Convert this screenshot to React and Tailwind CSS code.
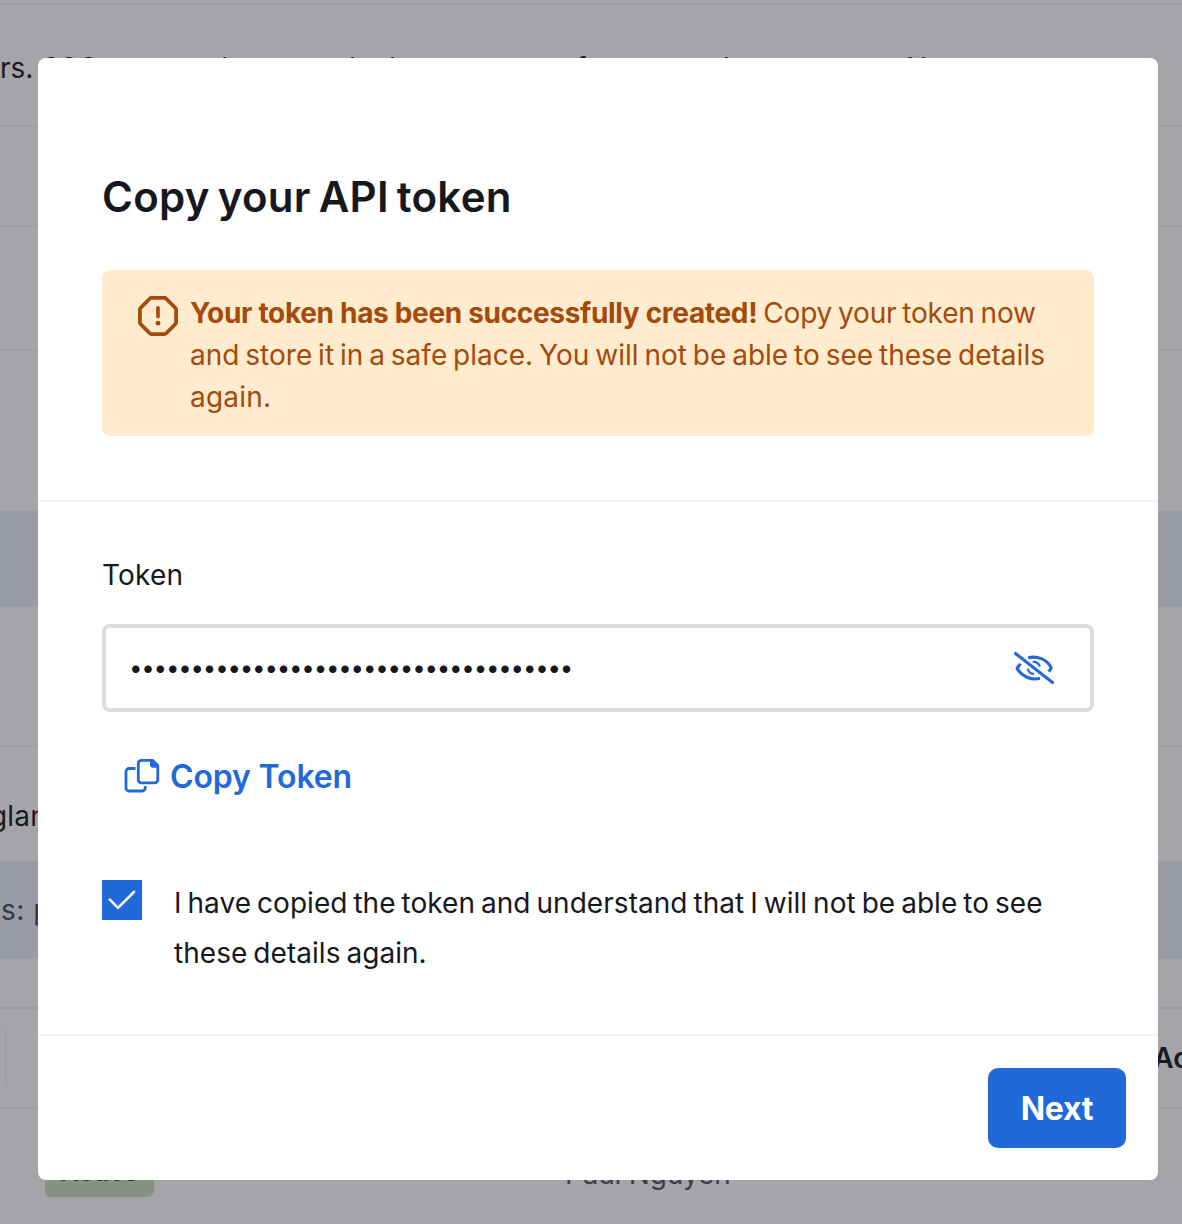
import React, { useState } from 'react';
import clsx from 'clsx';

const AlertOctagon = () => (
  <svg className="h-10 w-10 shrink-0" viewBox="0 0 40 40" fill="none" stroke="currentColor">
    <path d="M13.4 1.9h13.2c.6 0 1 .2 1.4.6l9.5 9.5c.4.4.6.8.6 1.4v13.2c0 .6-.2 1-.6 1.4l-9.5 9.5c-.4.4-.8.6-1.4.6H13.4c-.6 0-1-.2-1.4-.6l-9.5-9.5c-.4-.4-.6-.8-.6-1.4V13.4c0-.6.2-1 .6-1.4l9.5-9.5c.4-.4.8-.6 1.4-.6Z" strokeWidth="3.8" />
    <path d="M20 11.8v9" strokeWidth="3.6" strokeLinecap="round" />
    <circle cx="20" cy="27.2" r="2.4" fill="currentColor" stroke="none" />
  </svg>
);

const EyeHidden = () => (
  <svg className="h-10 w-10" viewBox="0 0 40 40" fill="none" stroke="currentColor" strokeWidth="3.1">
    <path d="M1.5 5.5 38.5 34.5" strokeLinecap="round" />
    <path d="M14.2 9.8C23.5 7.4 32.3 11.6 36.7 18.7c.5.7.5 1.5 0 2.2l-2 2.7" />
    <path d="M6.6 15.8 3.5 19.6c-.4.5-.4 1.1 0 1.6C8.6 29 17.5 32.5 26 30.3" />
    <path d="M18.7 13.7c3.6.2 6.2 1.9 7.3 4.8" strokeWidth="2.2" />
    <path d="M13.7 20.7c.7 3 3 5 6.3 5.4" strokeWidth="2.2" />
  </svg>
);

const CopyIcon = () => (
  <svg className="h-9 w-9" viewBox="0 0 36 36" fill="none" stroke="currentColor" strokeWidth="2.8">
    <path d="M17.3 2.3h11.2l5.3 5.3v14.3a3 3 0 0 1-3 3H17.3a3 3 0 0 1-3-3V5.3a3 3 0 0 1 3-3Z" />
    <path d="M26 1.5h3l5.8 5.8v2.4H29a3 3 0 0 1-3-3Z" fill="currentColor" stroke="none" />
    <path d="M11.5 10.5H5a3 3 0 0 0-3 3V30a3 3 0 0 0 3 3h13.2a3 3 0 0 0 3-3v-2" />
  </svg>
);

const CheckIcon = () => (
  <svg className="h-10 w-10" viewBox="0 0 40 40" fill="none" stroke="currentColor" strokeWidth="2.6" strokeLinecap="round" strokeLinejoin="round">
    <path d="m7.8 19.6 8.2 8.3L32 12" />
  </svg>
);

const aboutWords = [
  { text: 'rs.', width: 'w-[42px]' },
  { text: 'SSO', width: 'w-[88px]' },
  { text: 'use a', width: 'w-[82px]' },
  { text: 'the', width: 'w-[84px]' },
  { text: 'to', width: 'w-[53px]' },
  { text: 'be', width: 'w-[40px]' },
  { text: 'key', width: 'w-[45px]' },
  { text: 'to secure', width: 'w-[142px]' },
  { text: 'for access', width: 'w-[147px]' },
  { text: 'by our', width: 'w-[99px]' },
  { text: 'to use', width: 'w-[84px]' },
  { text: 'N', width: 'w-[40px]' },
];

// Settings page that sits underneath the dialog
const TokensPage = () => (
  <div className="h-full overflow-hidden bg-white whitespace-nowrap">
    <div className="h-[5px] border-b-2 border-[#f3f3f5]" />
    <div className="flex h-[122px] border-b-2 border-[#f3f3f5] pt-[42px] leading-[42px]">
      {aboutWords.map((word, i) => (
        <span key={i} className={clsx('shrink-0', word.width)}>{word.text}</span>
      ))}
    </div>
    <div className="h-[100px] border-b-2 border-[#f3f3f5]" />
    <div className="h-[124px] border-b-2 border-[#f3f3f5]" />
    <div className="h-[160px]" />
    <div className="h-24 bg-[#ebeff8]" />
    <div className="h-[140px] border-b-2 border-[#f3f3f5]" />
    <div className="h-[114px] pt-[48px] leading-[42px]">
      <span className="-ml-[10px] tracking-[0.2px]">gland</span>
    </div>
    <div className="h-[98px] bg-[#ebeff8] pt-[28px] leading-[42px] text-[#4c4c52]">
      <span className="ml-[1px] tracking-[0.5px]">s: public</span>
    </div>
    <div className="h-[50px] border-b-2 border-[#eeeff4]" />
    <div className="flex h-[100px] items-center justify-between border-b-2 border-[#f3f3f5]">
      <div className="ml-[5px] h-[58px] w-[2px] bg-[#f3f3f5]" />
      <span className="-mr-[59px] font-semibold">Action</span>
    </div>
    <div className="flex pt-[44px]">
      <span className="ml-[45px] flex h-[44px] w-[109px] justify-center rounded-md bg-[#cbdfbf] text-[25px] leading-[38px] font-bold text-[#3f3f49]">
        Active
      </span>
      <span className="ml-[411px] leading-[42px] tracking-[-0.2px] text-[#54545a]">Paul Nguyen</span>
    </div>
  </div>
);

const App = () => {
  const [visible, setVisible] = useState(false);
  const [confirmed, setConfirmed] = useState(true);

  return (
    <div className="relative h-[1224px] w-[1182px] overflow-hidden font-['Inter',sans-serif] text-[28px] text-[#16181d]">
      <TokensPage />

      <div className="absolute inset-0 bg-[#1d1f27]/40 px-[38px] pt-[58px]">
        <div className="h-[1122px] w-[1120px] rounded-lg bg-white" role="dialog">
          {/* Header */}
          <div className="h-[444px] border-b-2 border-[#f3f3f3] px-16 pt-[111px]">
            <h1 className="text-[42px] leading-[56px] font-semibold tracking-[0.3px] [word-spacing:-3px]">Copy your API token</h1>
            <div className="mt-[45px] flex h-[166px] gap-3 rounded-lg bg-[#ffecce] pt-[22px] pr-10 pl-9 text-[#a44a0b]">
              <div className="pt-[4px]">
                <AlertOctagon />
              </div>
              <p className="leading-[42px] whitespace-nowrap [word-spacing:-2px]">
                <strong className="font-bold tracking-[-0.32px] [word-spacing:0px]">Your token has been successfully created!</strong>{' '}
                <span className="tracking-[-0.14px]">Copy your token now</span>
                <br />
                <span className="tracking-[0.01px]">and store it in a safe place. You will not be able to see these details</span>
                <br />
                <span className="tracking-[0.2px]">again.</span>
              </p>
            </div>
          </div>

          {/* Token */}
          <div className="h-[534px] border-b-2 border-[#f3f3f3] px-16 pt-[52px]">
            <label className="block leading-[42px] tracking-[0.2px]">Token</label>
            <div className="mt-[28px] flex h-[88px] items-center justify-between rounded-lg border-4 border-[#dddddd] pr-9 pl-6">
              <span className="-ml-px text-[24px] tracking-[-1.19px]">{'•'.repeat(36)}</span>
              <button className="text-[#2169db]" onClick={() => setVisible(!visible)}>
                <EyeHidden />
              </button>
            </div>
            <button className="mt-[43px] ml-[22px] flex h-[42px] items-center gap-[10px] text-[32px] font-semibold tracking-[-0.15px] text-[#2169db]">
              <CopyIcon />
              <span className="pt-[2px]">Copy Token</span>
            </button>
            <div className="mt-[83px] flex gap-8">
              <button
                className={clsx('h-10 w-10 shrink-0 text-white', confirmed ? 'bg-[#2169db]' : 'border-2 border-[#8c8c96]')}
                onClick={() => setConfirmed(!confirmed)}
              >
                {confirmed && <CheckIcon />}
              </button>
              <p className="-mt-[2px] leading-[50px] whitespace-nowrap [word-spacing:-2px]">
                <span className="tracking-[0.05px]">I have copied the token and understand that I will not be able to see</span>
                <br />
                <span className="tracking-[0.05px]">these details again.</span>
              </p>
            </div>
          </div>

          {/* Footer */}
          <div className="flex justify-end p-8">
            <button className="h-20 w-[138px] rounded-[10px] bg-[#2169db] pt-[2px] text-[32px] font-bold tracking-[-0.2px] text-white">
              Next
            </button>
          </div>
        </div>
      </div>
    </div>
  );
};

export default App;
